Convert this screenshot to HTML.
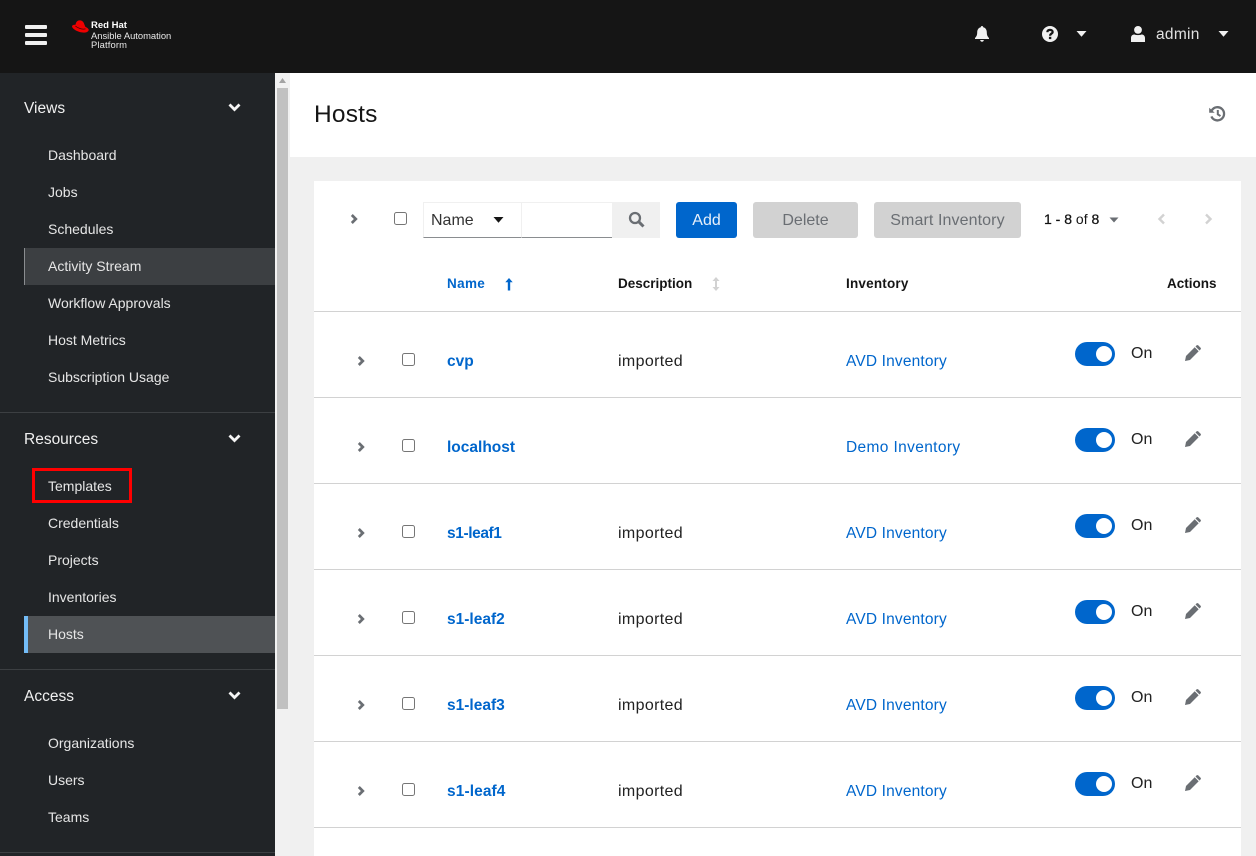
<!DOCTYPE html>
<html><head><meta charset="utf-8"><title>Hosts</title>
<style>
*{box-sizing:border-box}
html,body{margin:0;padding:0;width:1256px;height:856px;overflow:hidden;background:#f0f0f0;font-family:"Liberation Sans",sans-serif;color:#151515}
.a{position:absolute;white-space:nowrap}
#top{left:0;top:0;width:1256px;height:73px;background:#151515}
#side{left:0;top:73px;width:275px;height:783px;background:#212427}
.h{left:24px;font-size:15.5px;line-height:20px;color:#f0f0f0}
.n{left:48px;font-size:14px;line-height:20px;color:#e6e6e6}
.sep{left:0;width:275px;height:1px;background:#3c3f42}
.link{color:#06c}
.b{font-weight:bold}
.t{font-size:16px;line-height:20px}
.imp{letter-spacing:.35px;color:#222}
.avd{font-size:15.5px;letter-spacing:.16px}
.th{font-weight:bold;font-size:13.5px;line-height:20px}
.line{left:314px;width:927px;height:1px;background:#d2d2d2}
.cb{width:13px;height:13px;border:1px solid #767676;border-radius:2.5px;background:#fff}
.tog{left:1075px;width:40px;height:24px;border-radius:12px;background:#06c}
.tog i{position:absolute;left:21px;top:4px;width:16px;height:16px;border-radius:50%;background:#fff}
svg{position:absolute;display:block}
</style></head><body>
<div class="a" id="top"></div>
<div class="a" style="left:25px;top:25px;width:22px;height:4px;background:#f0f0f0;border-radius:1px"></div>
<div class="a" style="left:25px;top:33px;width:22px;height:4px;background:#f0f0f0;border-radius:1px"></div>
<div class="a" style="left:25px;top:41px;width:22px;height:4px;background:#f0f0f0;border-radius:1px"></div>
<svg style="left:72px;top:20px" width="17" height="13" viewBox="0 0 17 13"><path fill="#ee0000" d="M3.500 4.800C3.900 2.800 4.600 1 7 .4 9 0 11 1 11.800 3L13.300 6.800C14.800 7.600 16.300 8.500 16.700 9.600 17 11 15 12.700 12 12.600 6 12.500 .5 9 0 6.500 0 5.300 1.500 4.500 3.500 4.800Z"/><path fill="none" stroke="#3a0606" stroke-width=".7" d="M3.400 6C5.500 8 10 9.700 13.500 8.900"/></svg>
<div class="a b" style="left:91px;top:20px;font-size:9.500px;line-height:12px;color:#fff">Red Hat</div>
<div class="a" style="left:91px;top:30px;font-size:9.400px;line-height:12px;color:#e8e8e8">Ansible Automation</div>
<div class="a" style="left:91px;top:39px;font-size:9.400px;line-height:12px;color:#e8e8e8;letter-spacing:.15px">Platform</div>
<svg style="left:974px;top:26px" width="16" height="16" viewBox="0 0 16 16"><path fill="#f0f0f0" d="M8 0C7.200 0 6.800.5 6.800 1.300 4.500 1.900 3.200 3.800 3.200 6.200 3.200 9.500 2.300 10.500 1 12V13H15V12C13.700 10.500 12.800 9.500 12.800 6.200 12.800 3.800 11.500 1.900 9.200 1.300 9.200.5 8.800 0 8 0ZM6.200 14C6.200 15 7 15.800 8 15.800S9.800 15 9.800 14Z"/></svg>
<svg style="left:1042px;top:26px" width="16" height="16" viewBox="0 0 16 16"><circle cx="8" cy="8" r="8" fill="#f0f0f0"/><path fill="none" stroke="#151515" stroke-width="2.200" d="M5.300 6.200C5.400 4.700 6.500 3.900 8 3.900 9.600 3.900 10.700 4.800 10.700 6 10.700 7.600 8.100 7.600 8.100 9.700"/><rect x="6.900" y="10.800" width="2.400" height="2.300" fill="#151515"/></svg>
<svg style="left:1076px;top:31px" width="11" height="6" viewBox="0 0 11 6"><path fill="#f0f0f0" d="M.5 0H10.500L5.500 5.800Z"/></svg>
<svg style="left:1131px;top:26px" width="14" height="16" viewBox="0 0 14 16"><circle cx="7" cy="3.900" r="3.900" fill="#f0f0f0"/><path fill="#f0f0f0" d="M0 16V12C0 9.800 1.500 8.500 3.500 8.500 5 9.300 9 9.300 10.500 8.500 12.500 8.500 14 9.800 14 12V16Z"/></svg>
<div class="a" style="left:1156px;top:25px;font-size:15.500px;line-height:20px;color:#e0e0e0;letter-spacing:.3px">admin</div>
<svg style="left:1218px;top:31px" width="11" height="6" viewBox="0 0 11 6"><path fill="#f0f0f0" d="M.5 0H10.500L5.500 5.800Z"/></svg>

<div class="a" id="side"></div>
<div class="a h" style="top:99px">Views</div>
<div class="a n" style="top:145px">Dashboard</div>
<div class="a n" style="top:182px">Jobs</div>
<div class="a n" style="top:219px">Schedules</div>
<div class="a" style="left:24px;top:248px;width:251px;height:37px;background:#3c3f42;border-left:1px solid #8a8d90"></div>
<div class="a n" style="top:256px">Activity Stream</div>
<div class="a n" style="top:293px">Workflow Approvals</div>
<div class="a n" style="top:330px">Host Metrics</div>
<div class="a n" style="top:367px">Subscription Usage</div>
<div class="a sep" style="top:412px"></div>
<div class="a h" style="top:430px">Resources</div>
<div class="a" style="left:32px;top:468px;width:100px;height:35px;border:3px solid #f00"></div>
<div class="a n" style="top:476px">Templates</div>
<div class="a n" style="top:513px">Credentials</div>
<div class="a n" style="top:550px">Projects</div>
<div class="a n" style="top:587px">Inventories</div>
<div class="a" style="left:24px;top:616px;width:251px;height:37px;background:#4f5255;border-left:4px solid #73bcf7"></div>
<div class="a n" style="top:624px">Hosts</div>
<div class="a sep" style="top:669px"></div>
<div class="a h" style="top:687px">Access</div>
<div class="a n" style="top:733px">Organizations</div>
<div class="a n" style="top:770px">Users</div>
<div class="a n" style="top:807px">Teams</div>
<div class="a sep" style="top:852px"></div>
<svg style="left:228px;top:103px" width="13" height="9" viewBox="0 0 13 9"><path fill="none" stroke="#f5f5f5" stroke-width="2.800" d="M1.500 1.500L6.500 6.500 11.500 1.500"/></svg>
<svg style="left:228px;top:434px" width="13" height="9" viewBox="0 0 13 9"><path fill="none" stroke="#f5f5f5" stroke-width="2.800" d="M1.500 1.500L6.500 6.500 11.500 1.500"/></svg>
<svg style="left:228px;top:691px" width="13" height="9" viewBox="0 0 13 9"><path fill="none" stroke="#f5f5f5" stroke-width="2.800" d="M1.500 1.500L6.500 6.500 11.500 1.500"/></svg>

<div class="a" style="left:275px;top:73px;width:15px;height:783px;background:#f1f1f1"></div>
<div class="a" style="left:277px;top:88px;width:11px;height:621px;background:#c1c1c1"></div>
<svg style="left:279px;top:78px" width="7" height="5" viewBox="0 0 7 5"><path fill="#a3a3a3" d="M3.500 0L7 5H0Z"/></svg>

<div class="a" style="left:290px;top:73px;width:966px;height:84px;background:#fff"></div>
<div class="a" style="left:314px;top:100px;font-size:24.500px;line-height:30px;color:#151515;letter-spacing:.2px">Hosts</div>
<svg style="left:1208px;top:105px" width="18" height="18" viewBox="0 0 18 18"><path fill="none" stroke="#6a6e73" stroke-width="2.300" d="M3.800 5.400A6.600 6.600 0 1 1 3.400 11.400"/><path fill="#6a6e73" d="M1.200 2.800L6.700 7.800H1.200Z"/><path fill="none" stroke="#6a6e73" stroke-width="2" d="M9.800 5V9.300L12.500 11.100"/></svg>

<div class="a" style="left:314px;top:181px;width:927px;height:675px;background:#fff"></div>
<svg style="left:350px;top:213px" width="8" height="12" viewBox="0 0 8 12"><path fill="none" stroke="#6a6e73" stroke-width="2.700" d="M1.800 2L5.800 6 1.800 10"/></svg>
<div class="a cb" style="left:394px;top:212px"></div>
<div class="a" style="left:423px;top:202px;width:99px;height:36px;background:#fff;border:1px solid #f0f0f0;border-bottom:1px solid #8a8d90"></div>
<div class="a t" style="left:431px;top:211px;color:#333">Name</div>
<svg style="left:493px;top:217px" width="11" height="6" viewBox="0 0 11 6"><path fill="#151515" d="M.5 0H10.500L5.500 5.800Z"/></svg>
<div class="a" style="left:521px;top:202px;width:92px;height:36px;background:#fff;border-top:1px solid #f0f0f0;border-left:1px solid #f0f0f0;border-bottom:1px solid #8a8d90"></div>
<div class="a" style="left:612px;top:202px;width:48px;height:36px;background:#f0f0f0"></div>
<svg style="left:628px;top:211px" width="17" height="17" viewBox="0 0 17 17"><circle cx="7" cy="7" r="5" fill="none" stroke="#6a6e73" stroke-width="2.300"/><path stroke="#6a6e73" stroke-width="3" d="M10.700 10.700L15.500 15.500"/></svg>
<div class="a t" style="left:676px;top:202px;width:61px;height:36px;line-height:37px;background:#06c;color:#e8f0fa;border-radius:3px;text-align:center">Add</div>
<div class="a t" style="left:753px;top:202px;width:105px;height:36px;line-height:37px;background:#d2d2d2;color:#6a6e73;border-radius:3px;text-align:center">Delete</div>
<div class="a t" style="left:874px;top:202px;width:147px;height:36px;line-height:37px;background:#d2d2d2;color:#6a6e73;border-radius:3px;text-align:center;letter-spacing:.1px">Smart Inventory</div>
<div class="a" style="left:1044px;top:209px;font-size:14px;line-height:20px"><span style="color:#111;-webkit-text-stroke:.25px #111">1 - 8</span> of <span style="-webkit-text-stroke:.25px #111">8</span></div>
<svg style="left:1109px;top:217px" width="10" height="6" viewBox="0 0 10 6"><path fill="#6a6e73" d="M.5 .5H9.500L5 5.500Z"/></svg>
<svg style="left:1157px;top:213px" width="9" height="12" viewBox="0 0 9 12"><path fill="none" stroke="#d2d2d2" stroke-width="2.400" d="M7 1.500L2.500 6 7 10.500"/></svg>
<svg style="left:1204px;top:213px" width="9" height="12" viewBox="0 0 9 12"><path fill="none" stroke="#d2d2d2" stroke-width="2.400" d="M2 1.500L6.500 6 2 10.500"/></svg>

<div class="a th link" style="left:447px;top:274px;letter-spacing:.35px">Name</div>
<svg style="left:505px;top:278px" width="8" height="13" viewBox="0 0 8 13"><path fill="#06c" d="M4 0L7.700 4.300H5.200V12.500H2.800V4.300H.3Z"/></svg>
<div class="a th" style="left:618px;top:274px">Description</div>
<svg style="left:712px;top:277px" width="8" height="14" viewBox="0 0 8 14"><path fill="#d2d2d2" d="M4 0L7.500 4H5V10H7.500L4 14 .5 10H3V4H.5Z"/></svg>
<div class="a th" style="left:846px;top:274px;letter-spacing:.2px">Inventory</div>
<div class="a th" style="left:1167px;top:274px">Actions</div>
<div class="a line" style="top:311px"></div>

<svg style="left:357px;top:355px" width="8" height="12" viewBox="0 0 8 12"><path fill="none" stroke="#6a6e73" stroke-width="2.700" d="M1.800 2L5.800 6 1.800 10"/></svg>
<div class="a cb" style="left:402px;top:353px"></div>
<div class="a t b link" style="left:447px;top:352px;font-size:15.500px">cvp</div>
<div class="a t imp" style="left:618px;top:352px">imported</div>
<div class="a t link avd" style="left:846px;top:352px">AVD Inventory</div>
<div class="a tog" style="top:342px"><i></i></div>
<div class="a t" style="left:1131px;top:344px;color:#222">On</div>
<svg style="left:1185px;top:345px" width="16" height="16" viewBox="0 0 16 16"><path fill="#6a6e73" d="M0 16L1 11 9.700 2.300 13.700 6.300 5 15ZM10.500 1.500L11.700.3C12.100 0 12.700 0 13.100.3L15.700 2.900C16 3.300 16 3.900 15.700 4.300L14.500 5.500Z"/></svg>
<div class="a line" style="top:397px"></div>

<svg style="left:357px;top:441px" width="8" height="12" viewBox="0 0 8 12"><path fill="none" stroke="#6a6e73" stroke-width="2.700" d="M1.800 2L5.800 6 1.800 10"/></svg>
<div class="a cb" style="left:402px;top:439px"></div>
<div class="a t b link" style="left:447px;top:438px;font-size:15.500px">localhost</div>
<div class="a t link avd" style="left:846px;top:438px;letter-spacing:.36px">Demo Inventory</div>
<div class="a tog" style="top:428px"><i></i></div>
<div class="a t" style="left:1131px;top:430px;color:#222">On</div>
<svg style="left:1185px;top:431px" width="16" height="16" viewBox="0 0 16 16"><path fill="#6a6e73" d="M0 16L1 11 9.700 2.300 13.700 6.300 5 15ZM10.500 1.500L11.700.3C12.100 0 12.700 0 13.100.3L15.700 2.900C16 3.300 16 3.900 15.700 4.300L14.500 5.500Z"/></svg>
<div class="a line" style="top:483px"></div>

<svg style="left:357px;top:527px" width="8" height="12" viewBox="0 0 8 12"><path fill="none" stroke="#6a6e73" stroke-width="2.700" d="M1.800 2L5.800 6 1.800 10"/></svg>
<div class="a cb" style="left:402px;top:525px"></div>
<div class="a t b link" style="left:447px;top:524px;font-size:15.500px;letter-spacing:-.4px">s1-leaf1</div>
<div class="a t imp" style="left:618px;top:524px">imported</div>
<div class="a t link avd" style="left:846px;top:524px">AVD Inventory</div>
<div class="a tog" style="top:514px"><i></i></div>
<div class="a t" style="left:1131px;top:516px;color:#222">On</div>
<svg style="left:1185px;top:517px" width="16" height="16" viewBox="0 0 16 16"><path fill="#6a6e73" d="M0 16L1 11 9.700 2.300 13.700 6.300 5 15ZM10.500 1.500L11.700.3C12.100 0 12.700 0 13.100.3L15.700 2.900C16 3.300 16 3.900 15.700 4.300L14.500 5.500Z"/></svg>
<div class="a line" style="top:569px"></div>

<svg style="left:357px;top:613px" width="8" height="12" viewBox="0 0 8 12"><path fill="none" stroke="#6a6e73" stroke-width="2.700" d="M1.800 2L5.800 6 1.800 10"/></svg>
<div class="a cb" style="left:402px;top:611px"></div>
<div class="a t b link" style="left:447px;top:610px;font-size:15.500px">s1-leaf2</div>
<div class="a t imp" style="left:618px;top:610px">imported</div>
<div class="a t link avd" style="left:846px;top:610px">AVD Inventory</div>
<div class="a tog" style="top:600px"><i></i></div>
<div class="a t" style="left:1131px;top:602px;color:#222">On</div>
<svg style="left:1185px;top:603px" width="16" height="16" viewBox="0 0 16 16"><path fill="#6a6e73" d="M0 16L1 11 9.700 2.300 13.700 6.300 5 15ZM10.500 1.500L11.700.3C12.100 0 12.700 0 13.100.3L15.700 2.900C16 3.300 16 3.900 15.700 4.300L14.500 5.500Z"/></svg>
<div class="a line" style="top:655px"></div>

<svg style="left:357px;top:699px" width="8" height="12" viewBox="0 0 8 12"><path fill="none" stroke="#6a6e73" stroke-width="2.700" d="M1.800 2L5.800 6 1.800 10"/></svg>
<div class="a cb" style="left:402px;top:697px"></div>
<div class="a t b link" style="left:447px;top:696px;font-size:15.500px">s1-leaf3</div>
<div class="a t imp" style="left:618px;top:696px">imported</div>
<div class="a t link avd" style="left:846px;top:696px">AVD Inventory</div>
<div class="a tog" style="top:686px"><i></i></div>
<div class="a t" style="left:1131px;top:688px;color:#222">On</div>
<svg style="left:1185px;top:689px" width="16" height="16" viewBox="0 0 16 16"><path fill="#6a6e73" d="M0 16L1 11 9.700 2.300 13.700 6.300 5 15ZM10.500 1.500L11.700.3C12.100 0 12.700 0 13.100.3L15.700 2.900C16 3.300 16 3.900 15.700 4.300L14.500 5.500Z"/></svg>
<div class="a line" style="top:741px"></div>

<svg style="left:357px;top:785px" width="8" height="12" viewBox="0 0 8 12"><path fill="none" stroke="#6a6e73" stroke-width="2.700" d="M1.800 2L5.800 6 1.800 10"/></svg>
<div class="a cb" style="left:402px;top:783px"></div>
<div class="a t b link" style="left:447px;top:782px;font-size:15.500px;letter-spacing:.1px">s1-leaf4</div>
<div class="a t imp" style="left:618px;top:782px">imported</div>
<div class="a t link avd" style="left:846px;top:782px">AVD Inventory</div>
<div class="a tog" style="top:772px"><i></i></div>
<div class="a t" style="left:1131px;top:774px;color:#222">On</div>
<svg style="left:1185px;top:775px" width="16" height="16" viewBox="0 0 16 16"><path fill="#6a6e73" d="M0 16L1 11 9.700 2.300 13.700 6.300 5 15ZM10.500 1.500L11.700.3C12.100 0 12.700 0 13.100.3L15.700 2.900C16 3.300 16 3.900 15.700 4.300L14.500 5.500Z"/></svg>
<div class="a line" style="top:827px"></div>
</body></html>
